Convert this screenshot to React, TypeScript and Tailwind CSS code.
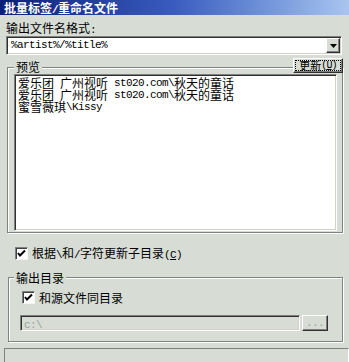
import React from 'react'

const ASCII = /^[\x20-\x7e]+$/

// SimSun style: CJK glyphs, half-width latin
function T({ s, box = '' }: { s: string; box?: string }) {
  const parts = s.split(/([\x20-\x7e]+)/).filter(Boolean)
  return (
    <>
      {parts.map((p, i) =>
        ASCII.test(p) ? (
          <span key={i} className={`font-['Liberation_Mono',monospace] text-[11px] tracking-[-0.6px] ${box}`}>
            {p}
          </span>
        ) : (
          <span key={i} className={box}>{p}</span>
        )
      )}
    </>
  )
}

function Check() {
  return (
    <div className="w-[13px] h-[13px] shrink-0 bg-white border border-t-[#808080] border-l-[#808080] border-r-[#f4f4f4] border-b-[#f4f4f4] shadow-[inset_1px_1px_0_#404040] flex items-center justify-center">
      <svg width="9" height="9" viewBox="0 0 9 9">
        <path d="M1 4 L3 6.5 L8 1.5" stroke="#000" strokeWidth="2" fill="none" />
      </svg>
    </div>
  )
}

const sunken =
  'border border-t-[#808080] border-l-[#808080] border-r-[#ffffff] border-b-[#ffffff] shadow-[inset_1px_1px_0_#303030,inset_-1px_-1px_0_#d4d0c8]'
const raised =
  'border border-t-[#ffffff] border-l-[#ffffff] border-r-[#303030] border-b-[#303030] shadow-[inset_-1px_-1px_0_#808080]'
const etched = 'border border-[#7e847e] shadow-[inset_1px_1px_0_#fff,1px_1px_0_#fff]'

export default function App() {
  const lines = ['爱乐团 广州视听 st020.com\\秋天的童话', '爱乐团 广州视听 st020.com\\秋天的童话', '蜜雪薇琪\\Kissy']
  return (
    <div className="w-[349px] h-[362px] overflow-hidden bg-[#d7ddd5] text-black text-[12px] leading-[12px] font-['Noto_Sans_CJK_SC','Noto_Sans',sans-serif]">
      {/* title bar */}
      <div className="h-[15px] pl-[4px] bg-gradient-to-r from-[#0c1f78] via-[#3a5cc0] to-[#a9c5ee] text-white font-bold leading-[15px] text-[12px]">
        <T s="批量标签/重命名文件" />
      </div>

      <div className="px-[6px]">
        <div className="mt-[6px] h-[13px] leading-[13px]">
          <T s="输出文件名格式:" />
        </div>

        {/* combo */}
        <div className={`mt-[2px] mr-[1px] h-[19px] bg-white flex items-center ${sunken}`}>
          <div className="flex-1 pl-[4px] leading-[15px] font-['Liberation_Mono',monospace] text-[11px] tracking-[-0.6px]">
            %artist%/%title%
          </div>
          <div className={`w-[14px] h-[15px] mr-[1px] bg-[#d7ddd5] flex items-center justify-center ${raised}`}>
            <svg width="7" height="4" viewBox="0 0 7 4">
              <path d="M0 0 H7 L3.5 4 Z" fill="#000" />
            </svg>
          </div>
        </div>

        {/* preview group */}
        <div className="relative mt-[3px] h-[175px]">
          <div className={`absolute left-[1px] right-0 top-[9px] bottom-0 ${etched} flex`}>
            <div className={`flex-1 ml-[6px] mr-[5px] mt-[6px] mb-[1px] bg-white pl-[3px] pt-[2px] ${sunken}`}>
              {lines.map((l, i) => (
                <div key={i} className="h-[12px] leading-[12px] whitespace-pre">
                  <T s={l} box="inline-block h-[12px] leading-[12px] align-top overflow-visible" />
                </div>
              ))}
            </div>
          </div>
          <div className="absolute left-[8px] top-[2px] px-[2px] bg-[#d7ddd5] leading-[13px]">预览</div>
          <button className={`absolute right-0 top-0 w-[50px] h-[15px] bg-[#d7ddd5] p-[1px] ${raised}`}>
            <div className="h-full border border-dotted border-black flex items-center justify-center leading-[11px] text-[11px]">
              <span>更新</span>
              <span className="font-['Liberation_Mono',monospace] text-[10px] tracking-[-0.8px]">(</span>
              <span className="font-['Liberation_Mono',monospace] text-[10px] tracking-[-0.8px] underline">U</span>
              <span className="font-['Liberation_Mono',monospace] text-[10px] tracking-[-0.8px]">)</span>
            </div>
          </button>
        </div>

        {/* subdir checkbox */}
        <div className="mt-[14px] ml-[9px] h-[13px] flex items-center gap-[4px]">
          <Check />
          <div className="leading-[13px] whitespace-pre">
            <T s="根据\和/字符更新子目录(" />
            <span className="font-['Liberation_Mono',monospace] text-[11px] tracking-[-0.6px] underline">C</span>
            <T s=")" />
          </div>
        </div>

        {/* output dir group */}
        <div className="relative mt-[11px] h-[71px]">
          <div className={`absolute left-[2px] right-0 top-[6px] bottom-0 ${etched} pl-[13px] pt-[13px]`}>
            <div className="h-[13px] flex items-center gap-[4px]">
              <Check />
              <div className="leading-[13px]">和源文件同目录</div>
            </div>
            <div className="mt-[11px] -ml-[2px] flex items-center">
              <div className={`w-[280px] h-[16px] bg-[#d7ddd5] pl-[3px] leading-[14px] text-[#9aa09a] ${sunken}`}>
                <span className="font-['Liberation_Mono',monospace] text-[11px] tracking-[-0.6px]">c:\</span>
              </div>
              <div className={`ml-[2px] w-[26px] h-[16px] bg-[#d7ddd5] flex items-center justify-center text-[#9aa09a] leading-[12px] ${raised}`}>
                <span className="font-['Liberation_Mono',monospace] text-[11px] tracking-[-0.6px]">...</span>
              </div>
            </div>
          </div>
          <div className="absolute left-[8px] top-0 px-[2px] bg-[#d7ddd5] leading-[13px]">输出目录</div>
        </div>
      </div>

      {/* status bar */}
      <div className="mt-[6px] ml-[4px] h-[15px] border border-t-[#808080] border-l-[#808080] border-r-[#ffffff] border-b-[#ffffff] bg-[#d7ddd5]" />
    </div>
  )
}
